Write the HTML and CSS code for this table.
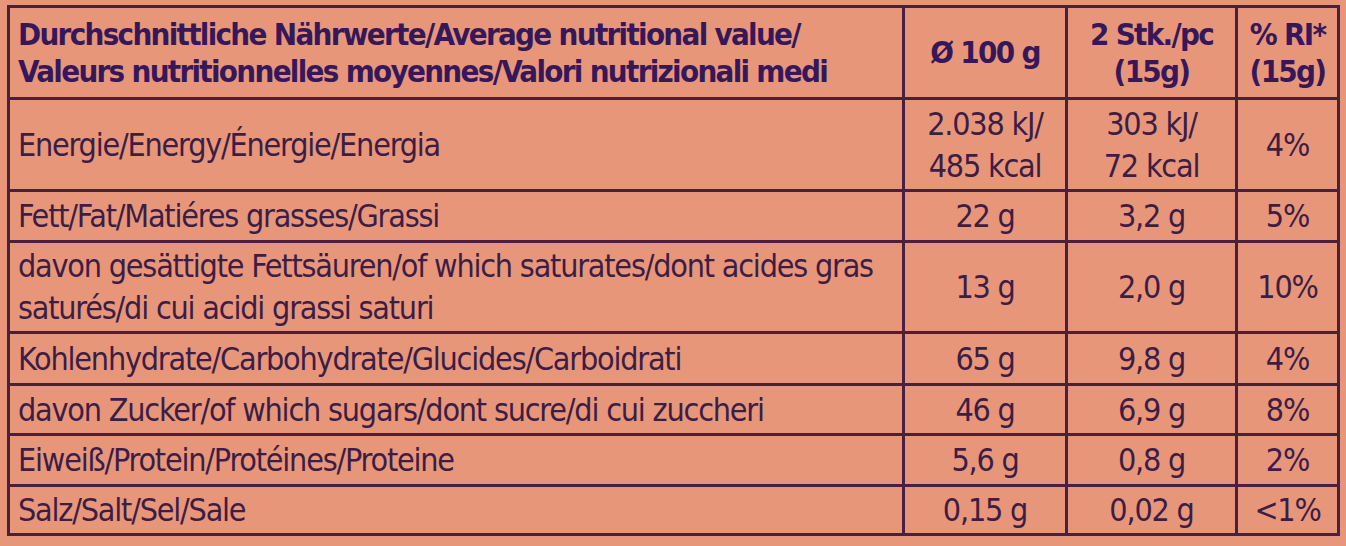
FILE: index.html
```html
<!DOCTYPE html>
<html lang="de">
<head>
<meta charset="utf-8">
<title>Nährwerte</title>
<link rel="stylesheet" href="styles.css">
</head>
<body>
<div class="label">
  <div class="grid">
    <div class="cell name head">Durchschnittliche Nährwerte/Average nutritional value/<br>Valeurs nutritionnelles moyennes/Valori nutrizionali medi</div>
    <div class="cell num head">Ø 100 g</div>
    <div class="cell num head">2 Stk./pc<br>(15g)</div>
    <div class="cell num head">% RI*<br>(15g)</div>

    <div class="cell name">Energie/Energy/Énergie/Energia</div>
    <div class="cell num">2.038 kJ/<br>485 kcal</div>
    <div class="cell num">303 kJ/<br>72 kcal</div>
    <div class="cell num">4%</div>

    <div class="cell name">Fett/Fat/Matiéres grasses/Grassi</div>
    <div class="cell num">22 g</div>
    <div class="cell num">3,2 g</div>
    <div class="cell num">5%</div>

    <div class="cell name">davon gesättigte Fettsäuren/of which saturates/dont acides gras<br>saturés/di cui acidi grassi saturi</div>
    <div class="cell num">13 g</div>
    <div class="cell num">2,0 g</div>
    <div class="cell num">10%</div>

    <div class="cell name">Kohlenhydrate/Carbohydrate/Glucides/Carboidrati</div>
    <div class="cell num">65 g</div>
    <div class="cell num">9,8 g</div>
    <div class="cell num">4%</div>

    <div class="cell name">davon Zucker/of which sugars/dont sucre/di cui zuccheri</div>
    <div class="cell num">46 g</div>
    <div class="cell num">6,9 g</div>
    <div class="cell num">8%</div>

    <div class="cell name">Eiweiß/Protein/Protéines/Proteine</div>
    <div class="cell num">5,6 g</div>
    <div class="cell num">0,8 g</div>
    <div class="cell num">2%</div>

    <div class="cell name">Salz/Salt/Sel/Sale</div>
    <div class="cell num">0,15 g</div>
    <div class="cell num">0,02 g</div>
    <div class="cell num">&lt;1%</div>
  </div>
</div>
</body>
</html>
```

FILE: styles.css
```css
html, body {
  margin: 0;
  padding: 0;
  background: #e8967a;
}

body {
  width: 1346px;
  height: 546px;
  overflow: hidden;
  font-family: "Liberation Sans Narrow", "DejaVu Sans Condensed", "DejaVu Sans", sans-serif;
  font-stretch: condensed;
  color: #3c1d45;
}

.label {
  padding: 5px 0 0 7px;
}

.grid {
  display: grid;
  width: 1327px;
  grid-template-columns: 892px 160px 167px 99px;
  grid-template-rows: 89px 89px 48px 88px 49px 47px 48px 46px;
  gap: 3px;
  padding: 3px;
  background: #4a2040;
}

.cell {
  background: #e8967a;
  display: flex;
  align-items: center;
  font-size: 32px;
  letter-spacing: -1.2px;
  line-height: 42px;
  white-space: nowrap;
}

.name {
  padding-left: 8px;
}

.num {
  justify-content: center;
  text-align: center;
}

.head {
  font-weight: bold;
  font-size: 31px;
  letter-spacing: -1.7px;
  line-height: 37px;
  color: #36185a;
}
```
